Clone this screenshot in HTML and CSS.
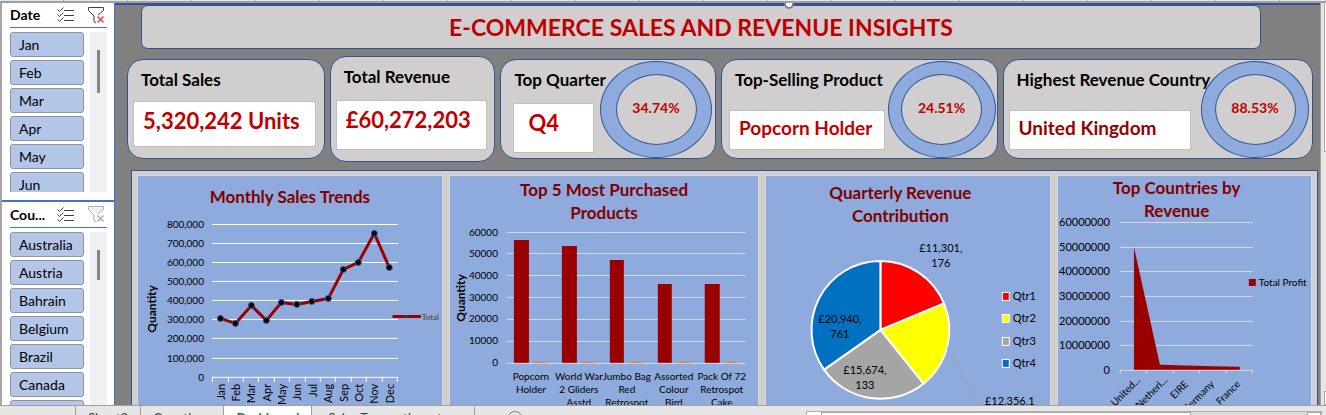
FILE: index.html
```
<!DOCTYPE html>
<html lang="en">
<head>
<meta charset="utf-8">
<title>E-Commerce Sales and Revenue Insights</title>
<link rel="stylesheet" href="styles.css">
</head>
<body>
<div class="column-heads"></div>
<div class="workspace">
  <aside class="slicers">
    <section class="slicer slicer-date">
      <header class="slicer-head">
        <h2>Date</h2>
        <button class="icon-btn" aria-label="Multi-select"><svg width="17" height="16" viewBox="0 0 17 16" fill="none" stroke="#404040"><path d="M7 3.500H17M7 8.500H17M7 13.500H17"/><path d="M.5 2.500l2 2 4-4M.5 7.500l2 2 4-4M.5 12.500l2 2 4-4"/></svg></button>
        <button class="icon-btn" aria-label="Clear filter"><svg width="17" height="17" viewBox="0 0 17 17" fill="none" stroke="#404040"><path d="M.5.500h15v3L10 8M.5.500v3L6 9v5.500l2 1.500"/><path d="M9.500 9.500l6 6M15.500 9.500l-6 6" stroke="#e8474c" stroke-width="1.500"/></svg></button>
      </header>
      <div class="slicer-body">
        <div class="slicer-items">
          <button>Jan</button><button>Feb</button><button>Mar</button><button>Apr</button><button>May</button><button>Jun</button>
        </div>
        <div class="track"><div class="thumb"></div></div>
      </div>
    </section>
    <section class="slicer slicer-country">
      <header class="slicer-head">
        <h2>Cou...</h2>
        <button class="icon-btn" aria-label="Multi-select"><svg width="17" height="16" viewBox="0 0 17 16" fill="none" stroke="#404040"><path d="M7 3.500H17M7 8.500H17M7 13.500H17"/><path d="M.5 2.500l2 2 4-4M.5 7.500l2 2 4-4M.5 12.500l2 2 4-4"/></svg></button>
        <button class="icon-btn" aria-label="Clear filter"><svg width="17" height="17" viewBox="0 0 17 17" fill="none" stroke="#b0b0b0"><path d="M.5.500h15v3L10 8M.5.500v3L6 9v5.500l2 1.500" fill="#eee"/><path d="M9.500 9.500l6 6M15.500 9.500l-6 6" stroke-width="1.500"/></svg></button>
      </header>
      <div class="slicer-body">
        <div class="slicer-items">
          <button>Australia</button><button>Austria</button><button>Bahrain</button><button>Belgium</button><button>Brazil</button><button>Canada</button><button aria-label="Next country"></button>
        </div>
        <div class="track"><div class="thumb thumb-short"></div></div>
      </div>
    </section>
  </aside>

  <main class="dashboard">
    <span class="handle"></span>
    <h1 class="banner">E-COMMERCE SALES AND REVENUE INSIGHTS</h1>
    <div class="cards">
      <section class="card card-sales">
        <h2>Total Sales</h2>
        <p class="value">5,320,242 Units</p>
      </section>
      <section class="card card-tall card-revenue">
        <h2>Total Revenue</h2>
        <p class="value value-tall">£60,272,203</p>
      </section>
      <section class="card card-quarter">
        <h2>Top Quarter</h2>
        <p class="value value-tall">Q4</p>
        <div class="ring"><span>34.74%</span></div>
      </section>
      <section class="card card-product">
        <h2>Top-Selling Product</h2>
        <p class="value value-small">Popcorn Holder</p>
        <div class="ring"><span>24.51%</span></div>
      </section>
      <section class="card card-country">
        <h2>Highest Revenue Country</h2>
        <p class="value value-small value-dark">United Kingdom</p>
        <div class="ring"><span>88.53%</span></div>
      </section>
    </div>

    <div class="charts">
      <section class="chart chart-monthly">
        <h2>Monthly Sales Trends</h2>
        <svg viewBox="138 210 304 210">
          <path class="grid-white" d="M212 224.500H398M212 243.500H398M212 262.500H398M212 281.500H398M212 300.500H398M212 319.500H398M212 338.500H398M212 358.500H398M212 377.500H398"/>
          <path class="grid-white" d="M212.500 377v5M228.500 377v5M243.500 377v5M258.500 377v5M274.500 377v5M289.500 377v5M305.500 377v5M320.500 377v5M335.500 377v5M351.500 377v5M366.500 377v5M382.500 377v5M397.500 377v5"/>
          <g class="axis end">
            <text x="204" y="228">800,000</text><text x="204" y="247">700,000</text><text x="204" y="266">600,000</text><text x="204" y="285">500,000</text><text x="204" y="304">400,000</text><text x="204" y="323">300,000</text><text x="204" y="342">200,000</text><text x="204" y="362">100,000</text><text x="204" y="381">0</text>
          </g>
          <text class="axis-title" transform="translate(156 309) rotate(-90)">Quantity</text>
          <polyline class="trend" points="220.500,318.500 235.500,323.500 251.500,305.500 266.500,320.500 281.500,302.500 297,304.500 312,301.500 328.500,298.500 343.500,269.500 358.500,262.500 374.500,233.500 389.500,267.500"/>
          <g class="dots">
            <circle cx="220.500" cy="318.500" r="3"/><circle cx="235.500" cy="323.500" r="3"/><circle cx="251.500" cy="305.500" r="3"/><circle cx="266.500" cy="320.500" r="3"/><circle cx="281.500" cy="302.500" r="3"/><circle cx="297" cy="304.500" r="3"/><circle cx="312" cy="301.500" r="3"/><circle cx="328.500" cy="298.500" r="3"/><circle cx="343.500" cy="269.500" r="3"/><circle cx="358.500" cy="262.500" r="3"/><circle cx="374.500" cy="233.500" r="3"/><circle cx="389.500" cy="267.500" r="3"/>
          </g>
          <g class="months end">
            <text transform="translate(225 384) rotate(-90)">Jan</text><text transform="translate(240 384) rotate(-90)">Feb</text><text transform="translate(255 384) rotate(-90)">Mar</text><text transform="translate(271 384) rotate(-90)">Apr</text><text transform="translate(286 384) rotate(-90)">May</text><text transform="translate(301 384) rotate(-90)">Jun</text><text transform="translate(317 384) rotate(-90)">Jul</text><text transform="translate(332 384) rotate(-90)">Aug</text><text transform="translate(348 384) rotate(-90)">Sep</text><text transform="translate(363 384) rotate(-90)">Oct</text><text transform="translate(378 384) rotate(-90)">Nov</text><text transform="translate(394 384) rotate(-90)">Dec</text>
          </g>
          <path class="trend" d="M394 316.500H420"/>
          <circle cx="406.500" cy="316.500" r="1.500" fill="#20406e"/>
          <text class="tiny" x="422" y="320">Total</text>
        </svg>
      </section>

      <section class="chart chart-products">
        <h2>Top 5 Most Purchased Products</h2>
        <svg viewBox="450 226 309 200">
          <path class="grid-grey" d="M507 232.500H746M507 253.500H746M507 275.500H746M507 297.500H746M507 319.500H746M507 341.500H746M507 363.500H746"/>
          <g class="axis end">
            <text x="498" y="236">60000</text><text x="498" y="257">50000</text><text x="498" y="279">40000</text><text x="498" y="301">30000</text><text x="498" y="322">20000</text><text x="498" y="344">10000</text><text x="498" y="366">0</text>
          </g>
          <text class="axis-title" transform="translate(465 298) rotate(-90)">Quantity</text>
          <path fill="#990000" d="M514 240h15v123h-15zM562 246h15v117h-15zM610 260h14v103h-14zM658 284h14v79h-14zM705 284h15v79h-15z"/>
          <path stroke="#ed7d31" d="M533 362.500h14M581 362.500h14M628 362.500h15M676 362.500h15M724 362.500h14"/>
          <g class="axis middle">
            <text x="531" y="380">Popcorn</text><text x="531" y="393">Holder</text>
            <text x="579" y="380">World War</text><text x="579" y="393">2 Gliders</text><text x="579" y="406">Asstd</text>
            <text x="627" y="380">Jumbo Bag</text><text x="627" y="393">Red</text><text x="627" y="406">Retrospot</text>
            <text x="674" y="380">Assorted</text><text x="674" y="393">Colour</text><text x="674" y="406">Bird</text>
            <text x="722" y="380">Pack Of 72</text><text x="722" y="393">Retrospot</text><text x="722" y="406">Cake</text>
          </g>
        </svg>
      </section>

      <section class="chart chart-quarterly">
        <h2>Quarterly Revenue Contribution</h2>
        <svg viewBox="767 229 284 200">
          <g stroke="#fff" stroke-width="2" stroke-linejoin="round">
            <path fill="#ff0000" d="M881.500 330V261A69 69 0 0 1 945.200 303.600Z"/>
            <path fill="#ffff00" d="M881.500 330L945.200 303.600A69 69 0 0 1 924.600 383.800Z"/>
            <path fill="#a5a5a5" d="M881.500 330L924.600 383.800A69 69 0 0 1 825.100 369.700Z"/>
            <path fill="#0070c0" d="M881.500 330L825.100 369.700A69 69 0 0 1 881.500 261Z"/>
          </g>
          <path d="M948 347L979 402.500H985" fill="none" stroke="#a5a5a5"/>
          <g class="label middle">
            <text x="942" y="252">£11,301,</text><text x="942" y="267">176</text>
            <text x="841" y="323">£20,940,</text><text x="841" y="338">761</text>
            <text x="866" y="374">£15,674,</text><text x="866" y="389">133</text>
            <text x="1011" y="405">£12,356,1</text>
          </g>
          <g stroke="#fff">
            <rect x="1003.500" y="292.500" width="7" height="8" fill="#f00" /><rect x="1003.500" y="314.500" width="7" height="8" fill="#ff0"/><rect x="1003.500" y="337.500" width="7" height="8" fill="#a5a5a5"/><rect x="1003.500" y="359.500" width="7" height="8" fill="#0070c0"/>
          </g>
          <g class="label"><text x="1014" y="300">Qtr1</text><text x="1014" y="322">Qtr2</text><text x="1014" y="345">Qtr3</text><text x="1014" y="367">Qtr4</text></g>
        </svg>
      </section>

      <section class="chart chart-countries">
        <h2>Top Countries by Revenue</h2>
        <svg viewBox="1058 222 253 200">
          <path class="grid-grey" d="M1120 222.500H1253M1120 247.500H1253M1120 271.500H1253M1120 296.500H1253M1120 321.500H1253M1120 345.500H1253M1120 370.500H1253M1120.500 370v4M1146.500 370v4M1173.500 370v4M1199.500 370v4M1226.500 370v4M1252.500 370v4"/>
          <g class="label end">
            <text x="1110" y="226">60000000</text><text x="1110" y="251">50000000</text><text x="1110" y="275">40000000</text><text x="1110" y="300">30000000</text><text x="1110" y="325">20000000</text><text x="1110" y="349">10000000</text><text x="1110" y="374">0</text>
          </g>
          <path fill="#990000" d="M1134 247L1160 365L1213 366.500L1240 367V370H1134Z"/>
          <g class="axis end">
            <text transform="translate(1141 381) rotate(-45)">United...</text><text transform="translate(1168 381) rotate(-45)">Netherl...</text><text transform="translate(1189 385) rotate(-45)">EIRE</text><text transform="translate(1215 385) rotate(-45)">Germany</text><text transform="translate(1241 385) rotate(-45)">France</text>
          </g>
          <rect x="1249" y="279" width="7" height="7" fill="#990000"/>
          <text class="axis" x="1259" y="286">Total Profit</text>
        </svg>
      </section>
    </div>
  </main>
  <div class="sheet-edge"><div class="pane"></div><div class="pane-end"></div></div>
</div>
<footer class="sheet-bar">
  <nav class="tabs">
    <a href="#sheet">Sheet3</a><a href="#questions">Questions</a><a href="#dashboard" class="active">Dashboard</a><a href="#sales">Sales Transactions_t</a>
  </nav>
  <button class="add-sheet" aria-label="New sheet"></button>
  <div class="hscroll"><span class="bar"></span><span class="arrow"></span></div>
</footer>
</body>
</html>
```
FILE: styles.css
```
* { box-sizing: border-box; }
body {
  margin: 0;
  height: 100vh;
  display: flex;
  flex-direction: column;
  overflow: hidden;
  background: #e6e6e6;
  color: #000;
  font-family: Lato, "Liberation Sans", sans-serif;
}
h1, h2, p { margin: 0; }
button { font: inherit; color: inherit; }

.column-heads {
  flex: none;
  height: 3px;
  border-bottom: 2px solid #a0a0a0;
  background: repeating-linear-gradient(90deg, #e6e6e6 0 63px, #a0a0a0 63px 64px);
}
.workspace { flex: 1; min-height: 0; display: flex; overflow: hidden; }

.slicers {
  flex: none;
  width: 115px;
  display: flex;
  flex-direction: column;
  border-left: 2px solid #a6a6a6;
  background: #fff;
  border-right: 1px solid #4472c4;
}
.slicer { padding: 0 7px 0 8px; display: flex; flex-direction: column; }
.slicer-date { flex: none; height: 199px; border-bottom: 2px solid #4472c4; padding-bottom: 8px; }
.slicer-country { flex: 1; min-height: 0; overflow: hidden; }
.slicer-head {
  flex: none;
  display: flex;
  align-items: center;
  height: 26px;
  padding-right: 2px;
  border-bottom: 1px solid #4472c4;
}
.slicer-date .slicer-head { height: 25px; }
.slicer-head h2 { flex: 1; font-size: 14px; line-height: 16px; }
.icon-btn { padding: 0; margin-left: 14px; border: 0; background: none; display: flex; }
.slicer-head h2 + .icon-btn { margin-left: 0; }
.slicer-body { flex: 1; min-height: 0; display: flex; gap: 6px; padding-top: 4px; overflow: hidden; }
.slicer-items { flex: 1; display: flex; flex-direction: column; gap: 3px; overflow: hidden; }
.slicer-items button {
  flex: none;
  height: 25px;
  padding: 0 8px;
  border: 1px solid #8f949c;
  border-radius: 3px;
  background: #b4c6e7;
  font-size: 14px;
  line-height: 20px;
  text-align: left;
}
.track { width: 17px; background: #f0f0f0; padding-top: 18px; }
.thumb { width: 3px; height: 43px; margin: 0 auto; background: #858585; }
.thumb-short { height: 30px; }

.dashboard {
  position: relative;
  flex: 1;
  min-width: 0;
  padding: 0 2px 0 12px;
  border-top: 2px solid #2f5597;
  background: #808080;
}
.handle {
  position: absolute;
  left: 55.5%;
  top: -6px;
  width: 10px;
  height: 10px;
  border: 2px solid #808080;
  border-radius: 50%;
  background: #fff;
}
.banner {
  margin: 0 57px 0 14px;
  height: 44px;
  border: 1px solid #2f5597;
  border-radius: 7px;
  background: #d0cece;
  color: #c00000;
  font-size: 23px;
  line-height: 43px;
  text-align: center;
}
.cards {
  display: grid;
  grid-template-columns: 198fr 166fr 216fr 277fr 311fr;
  gap: 5px;
  align-items: center;
  margin: 7px 5px 0 0;
}
.card {
  position: relative;
  height: 100px;
  padding: 9px 5px 0;
  border: 1px solid #2f5597;
  border-radius: 16px;
  background: #d0cece;
}
.card-tall { height: 106px; }
.card h2 { padding-left: 8px; font-size: 17px; line-height: 22px; white-space: nowrap; }
.value {
  width: fit-content;
  height: 46px;
  margin-top: 10px;
  padding: 0 15px 0 9px;
  border: 1px solid #bfbfbf;
  background: #fff;
  color: #c00000;
  font-size: 22px;
  font-weight: 700;
  line-height: 38px;
  white-space: nowrap;
}
.value-tall { height: 50px; margin-top: 12px; }
.value-small { height: 40px; margin-top: 19px; padding: 0 12px 0 9px; font-size: 19px; line-height: 34px; }
.value-dark { color: #990000; }
.card-quarter .value { margin-left: 7px; padding: 0 34px 0 14px; }
.card-country .value { padding-right: 34px; }
.card-product .value { margin-left: 2px; }
.ring {
  position: absolute;
  top: 1px;
  right: 3px;
  width: 108px;
  height: 97px;
  display: grid;
  place-items: center;
  border-radius: 50%;
  border: 1px solid #2f5597;
  background: #8faadc;
}
.ring span {
  display: grid;
  place-items: center;
  width: 81px;
  height: 71px;
  padding-bottom: 4px;
  border: 1px solid #2f5597;
  border-radius: 50%;
  background: #d0cece;
  color: #c00000;
  font-size: 14px;
  font-weight: 700;
}
.card-quarter .ring { width: 112px; }
.card-product .ring { right: 1px; }

.charts {
  display: grid;
  grid-template-columns: 306fr 311fr 286fr 255fr;
  gap: 6px;
  margin: 8px 0 0 4px;
  padding: 4px 5px 0;
  border: 1px solid #2f5597;
  background: #d0cece;
}
.chart { padding-top: 2px; border: 1px solid #d9d9d9; background: #8faadc; }
.chart h2 {
  width: 190px;
  margin: 0 auto 2px;
  color: #800000;
  font-size: 17px;
  line-height: 23px;
  text-align: center;
}
.chart-monthly { padding-top: 9px; }
.chart-quarterly { padding-top: 5px; }
.chart-quarterly h2, .chart-countries h2 { padding-right: 16px; }
.chart-countries { padding-top: 0; }
.chart-countries h2 { margin-bottom: 0; }
.chart svg { display: block; width: 100%; overflow: visible; }
.grid-white { stroke: #fff; }
.grid-grey { stroke: #d9d9d9; }
.axis { font-size: 10px; }
.months, .label { font-size: 11px; }
.end { text-anchor: end; }
.middle { text-anchor: middle; }
.axis-title { font-size: 12px; font-weight: 700; text-anchor: middle; }
.tiny { font-size: 8px; font-weight: 700; fill: #595959; }
.trend { fill: none; stroke: #990000; stroke-width: 3; stroke-linecap: round; stroke-linejoin: round; }
.dots { fill: #000; stroke: #2f5597; }

.sheet-edge { flex: none; width: 6px; border-left: 1px solid #a0a0a0; display: flex; flex-direction: column; justify-content: space-between; align-items: flex-end; }
.pane { width: 2px; height: 149px; border: solid #a6a6a6; border-width: 0 0 1px 1px; background: #fff; }
.pane-end { width: 2px; height: 14px; border: solid #a6a6a6; border-width: 1px 0 1px 1px; background: #fff; }

.sheet-bar {
  flex: none;
  display: flex;
  height: 10px;
  overflow: hidden;
  border-top: 1px solid #a0a0a0;
  background: #e6e6e6;
}
.tabs { display: flex; padding-left: 75px; }
.tabs a {
  height: 24px;
  padding: 4px 12px;
  border-left: 1px solid #a0a0a0;
  color: #444;
  font-size: 13px;
  line-height: 16px;
  text-decoration: none;
}
.tabs a:last-child { padding: 4px 32px 4px 16px; border-right: 1px solid #a0a0a0; }
.tabs .active { background: #fff; color: #217346; font-weight: 700; }
.add-sheet { width: 16px; height: 16px; margin: 5px 0 0 32px; padding: 0; border: 1px solid #808080; border-radius: 50%; background: none; }
.hscroll { display: flex; flex: 1; margin: 6px 5px 0 284px; height: 14px; background: #dadada; border-left: 14px solid #fff; outline: 1px solid #b0b0b0; }
.bar { width: 74%; background: #fff; border: 1px solid #a6a6a6; }
.arrow { width: 14px; margin-left: auto; background: #fff; border: 1px solid #a6a6a6; }
```
